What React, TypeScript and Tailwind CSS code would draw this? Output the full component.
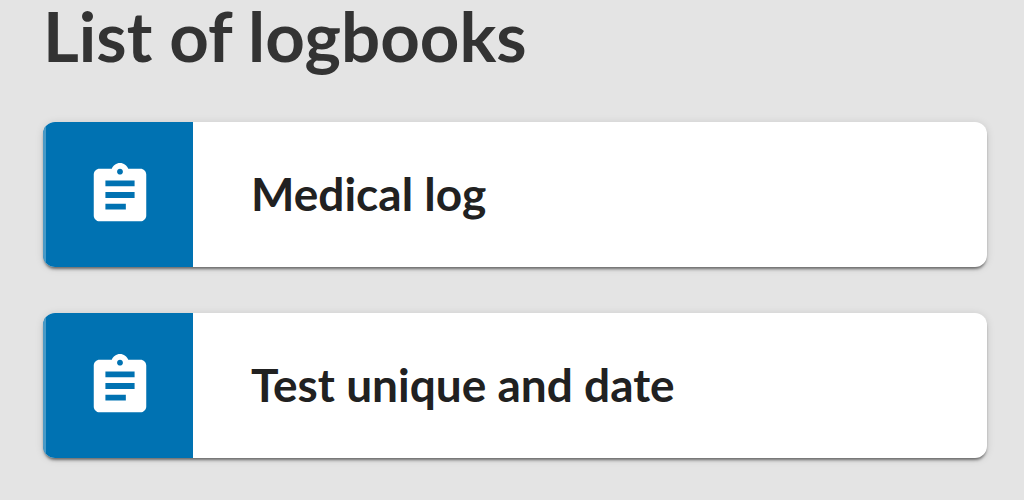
import { MdAssignment } from 'react-icons/md';

const LOGBOOKS = [
  { id: 'medical', title: 'Medical log' },
  { id: 'test', title: 'Test unique and date' },
];

export default function App() {
  return (
    <main className="min-h-screen bg-[#e4e4e4] pr-[37px] pl-[43px] font-['Lato',sans-serif]">
      <h1 className="text-[69px] leading-[72px] font-bold text-[#333333]">List of logbooks</h1>

      <ul className="mt-[50px] space-y-[46px] pb-10">
        {LOGBOOKS.map(logbook => (
          <li key={logbook.id}>
            <a
              href={`#${logbook.id}`}
              className="flex h-[145px] overflow-hidden rounded-xl bg-white shadow-[0_3px_3px_-1px_rgba(0,0,0,0.5),0_1px_8px_rgba(0,0,0,0.12)]"
            >
              <span className="flex w-[150px] shrink-0 items-center justify-center border-l-3 border-[#4a9ac6] bg-[#0072b2]">
                <MdAssignment className="size-[70px] text-white" aria-hidden="true" />
              </span>
              <span className="flex items-center px-[58px] pb-0.5 text-[46px] leading-[56px] font-bold text-[#212121]">
                {logbook.title}
              </span>
            </a>
          </li>
        ))}
      </ul>
    </main>
  );
}
